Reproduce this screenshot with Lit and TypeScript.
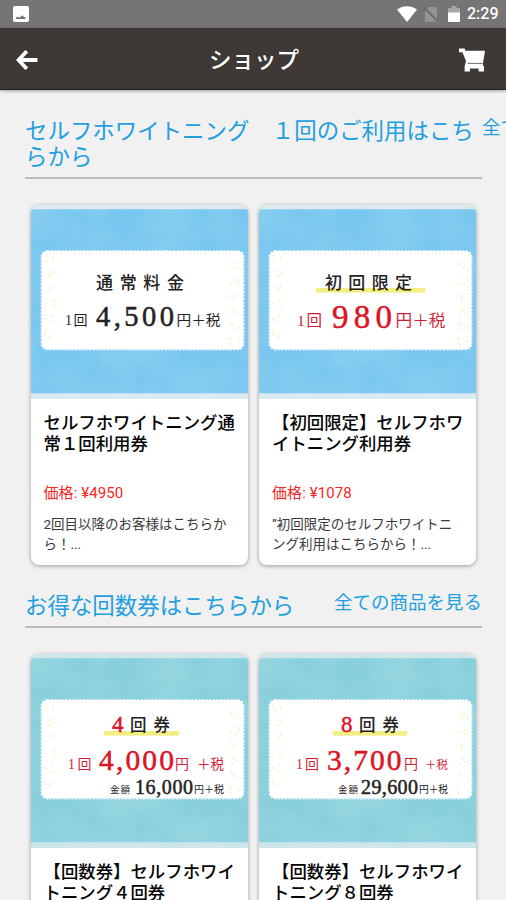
import { LitElement, html, svg, css } from "lit";
import { customElement, property } from "lit/decorators.js";

interface Label {
  t: string;
  x: number;
  y: number;
  w: number;
  size: number;
  cls: string;
}

interface Product {
  id: string;
  theme: "sky" | "aqua";
  underline?: [number, number];
  labels: Label[];
  title: string;
  price: string;
  description: string;
}

interface Section {
  title: string;
  products: Product[];
}

const label = (t: string, x: number, y: number, w: number, size: number, cls: string): Label => ({ t, x, y, w, size, cls });

const SECTIONS: Section[] = [
  {
    title: "セルフホワイトニング　１回のご利用はこちらから",
    products: [
      {
        id: "p1",
        theme: "sky",
        labels: [
          label("通常料金", 65, 84, 88, 17, "ink head"),
          label("1回", 34, 119.5, 22.5, 14, "ink"),
          label("4,500", 65, 120.5, 78, 28.5, "ink num"),
          label("円＋税", 145.5, 119.5, 44, 14, "ink"),
        ],
        title: "セルフホワイトニング通常１回利用券",
        price: "¥4950",
        description: "2回目以降のお客様はこちらから！...",
      },
      {
        id: "p2",
        theme: "sky",
        underline: [57, 109],
        labels: [
          label("初回限定", 66, 84, 87, 17, "ink head"),
          label("1回", 38, 121, 25, 15.5, "red"),
          label("980", 73, 122.5, 60, 33, "red num"),
          label("円＋税", 136.5, 121, 50, 15.5, "red"),
        ],
        title: "【初回限定】セルフホワイトニング利用券",
        price: "¥1078",
        description: "”初回限定のセルフホワイトニング利用はこちらから！...",
      },
    ],
  },
  {
    title: "お得な回数券はこちらから",
    products: [
      {
        id: "p3",
        theme: "aqua",
        underline: [73, 75],
        labels: [
          label("4", 81, 78, 12, 23, "red num"),
          label("回券", 99, 77, 40, 16.5, "ink head"),
          label("1回", 37, 115, 23.5, 14, "red"),
          label("4,000", 68, 116, 75, 29.5, "red num"),
          label("円", 144, 115, 14, 14, "red"),
          label("＋税", 166, 115, 27, 13.5, "red"),
          label("金額", 79, 139, 20, 9.5, "ink"),
          label("16,000", 104, 140, 58, 20, "ink num"),
          label("円＋税", 163, 139, 30, 10, "ink"),
        ],
        title: "【回数券】セルフホワイトニング４回券",
        price: "¥17600",
        description: "お得な４回券はこちらから！...",
      },
      {
        id: "p4",
        theme: "aqua",
        underline: [74, 74],
        labels: [
          label("8", 82, 78, 12, 23, "red num"),
          label("回券", 100, 77, 40, 16.5, "ink head"),
          label("1回", 37, 115, 23, 14, "red"),
          label("3,700", 68, 116, 74.5, 29.5, "red num"),
          label("円", 145, 115, 14, 14, "red"),
          label("＋税", 166, 115, 23, 11.5, "red"),
          label("金額", 79, 139, 20, 9.5, "ink"),
          label("29,600", 102, 140, 57, 20, "ink num"),
          label("円＋税", 160, 139, 29, 9.7, "ink"),
        ],
        title: "【回数券】セルフホワイトニング８回券",
        price: "¥32560",
        description: "お得な８回券はこちらから！...",
      },
    ],
  },
];

// Pale confetti scattered along both ends of the ticket.
const CONFETTI = Array.from({ length: 100 }, (_, i) => {
  const noise = Math.abs(Math.sin(i * 12.9898) * 43758.5453) % 1;
  const spread = noise * 12;
  const y = 50 + ((i * 53) % 91);
  return { x: i % 2 ? 13 + spread : 210 - spread, y };
});

@customElement("ticket-banner")
export class TicketBanner extends LitElement {
  @property({ attribute: false }) product!: Product;

  static styles = css`
    :host { display: block; height: 194px; }
    svg { display: block; width: 100%; height: 100%; }
    text { font-family: "Liberation Serif", "Noto Sans CJK JP", serif; }
    .ink { fill: #242222; }
    .head { font-weight: 500; }
    .red { fill: #d21f36; }
    .num { stroke-width: 0.5; }
    .ink.num { stroke: #242222; }
    .red.num { fill: #dc1425; stroke: #dc1425; }
    .sky { fill: #76c6ef; }
    .aqua { fill: #86cfdb; }
    .edge-sky { fill: #d9e9ee; }
    .edge-aqua { fill: #cbe4e9; }
    .ticket { fill: #fff; }
    .perforation { fill: none; stroke: #fff; stroke-opacity: 0.8; stroke-width: 1.4; stroke-dasharray: 2 1.6; }
    .marker { fill: #f4ee80; }
    .dot { fill: #f8f5d6; }
  `;

  render() {
    const p = this.product;
    return html`<svg viewBox="0 0 217 194" preserveAspectRatio="none">
      <defs>
        <filter id="paper" x="0" y="0" width="100%" height="100%">
          <feTurbulence type="fractalNoise" baseFrequency="0.025 0.03" numOctaves="3" seed="4"></feTurbulence>
          <feColorMatrix values="0 0 0 0 1  0 0 0 0 1  0 0 0 0 1  0.22 0 0 0 -0.05"></feColorMatrix>
        </filter>
      </defs>
      <rect class="edge-${p.theme}" width="217" height="194"></rect>
      <rect class=${p.theme} y="4.3" width="217" height="184"></rect>
      <rect width="217" height="194" filter="url(#paper)"></rect>
      <rect class="ticket" x="10.5" y="46" width="202" height="98.6" rx="6"></rect>
      <rect class="perforation" x="10.2" y="45.7" width="202.6" height="99.2" rx="6"></rect>
      ${CONFETTI.map((c) => svg`<circle class="dot" cx=${c.x} cy=${c.y} r="0.9"></circle>`)}
      ${p.underline
        ? svg`<rect class="marker" x=${p.underline[0]} y=${p.theme === "sky" ? 83 : 77} width=${p.underline[1]} height="4.6"></rect>`
        : null}
      ${p.labels.map(
        (l) => svg`<text class=${l.cls} x=${l.x} y=${l.y} font-size=${l.size} textLength=${l.w} lengthAdjust=${l.t.includes("＋") ? "spacingAndGlyphs" : "spacing"}>${l.t}</text>`
      )}
    </svg>`;
  }
}

@customElement("product-card")
export class ProductCard extends LitElement {
  @property({ attribute: false }) product!: Product;

  static styles = css`
    :host {
      display: block;
      height: 360px;
      box-sizing: border-box;
      background: #fff;
      border-radius: 8px;
      overflow: hidden;
      box-shadow: 0 1px 4px rgba(0, 0, 0, 0.36);
    }
    .body { padding: 14px 8px 0 13px; }
    .title { height: 63px; font-size: 17.4px; line-height: 21px; font-weight: 500; color: #050505; }
    .price { margin-top: 7px; font-size: 15px; line-height: 20px; letter-spacing: 0.1px; color: #fb2424; }
    .desc { margin-top: 12px; padding-right: 6px; font-size: 13.5px; line-height: 19.5px; color: #3a3a3a; }
  `;

  render() {
    const p = this.product;
    return html`
      <ticket-banner .product=${p}></ticket-banner>
      <div class="body">
        <div class="title">${p.title}</div>
        <div class="price">価格: ${p.price}</div>
        <div class="desc">${p.description}</div>
      </div>
    `;
  }
}

@customElement("app-root")
export class AppRoot extends LitElement {
  static styles = css`
    :host {
      display: flex;
      flex-direction: column;
      width: 506px;
      height: 900px;
      overflow: hidden;
      background: #f1f1f1;
      font-family: Roboto, "Noto Sans CJK JP", sans-serif;
    }
    .status {
      flex: none;
      display: flex;
      align-items: center;
      height: 28px;
      box-sizing: border-box;
      padding: 0 8px 0 12px;
      background: #757575;
      color: #fff;
    }
    .status svg { display: block; flex: none; }
    .wifi { margin-left: auto; }
    .sim { margin-left: 7px; }
    .battery { margin-left: 10px; }
    .clock { margin-left: 7px; width: 31px; font-size: 16px; line-height: 30px; font-weight: 500; white-space: nowrap; }
    .bar {
      flex: none;
      display: grid;
      grid-template-columns: 1fr auto 1fr;
      align-items: center;
      height: 62px;
      box-sizing: border-box;
      padding: 2px 20px 0 16px;
      background: #3e3837;
      border-bottom: 1px solid #262120;
      box-shadow: 0 1px 3px rgba(0, 0, 0, 0.35);
      color: #fff;
    }
    .bar svg { display: block; }
    .bar h1 { margin: 0; padding-left: 6px; font-size: 22.5px; line-height: 30px; font-weight: 500; }
    .cart { justify-self: end; }
    .content { flex: 1; min-height: 0; padding: 27.5px 24px 0 25px; }
    .head {
      display: flex;
      justify-content: space-between;
      border-bottom: 2px solid #bcbcbc;
      padding-bottom: 6.5px;
      color: #229fdf;
    }
    .head h2 { flex: none; max-width: 100%; margin: 0; font-size: 22.45px; line-height: 26.5px; font-weight: 400; }
    .all { flex: none; font-size: 18.5px; line-height: 21px; font-weight: 400; white-space: nowrap; }
    .grid { display: grid; grid-template-columns: 217px 217px; gap: 11.5px; padding: 26px 0 28px 5.5px; }
  `;

  render() {
    return html`
      <div class="status">
        <svg width="18" height="18" viewBox="0 0 18 18">
          <rect x="1" y="1" width="16" height="16" rx="2" fill="#fff"></rect>
          <path d="M4 14v-1.6l2-.6 1.8.6 2.4-2.2 1.6 1.6 1.6.4V14z" fill="#757575"></path>
        </svg>
        <svg class="wifi" width="20" height="16" viewBox="0 0 20 16"><path d="M0 3.6C6-1 14-1 20 3.6L10 16z" fill="#fff"></path></svg>
        <svg class="sim" width="14" height="16" viewBox="0 0 14 16">
          <path d="M5 1h8v15H1V5z" fill="#949494"></path>
          <path d="M0 1.5l14 14" stroke="#6b6b6b" stroke-width="1.8"></path>
        </svg>
        <svg class="battery" width="12" height="16" viewBox="0 0 12 16">
          <path d="M3.5 0h5v2H11a1 1 0 0 1 1 1v4H0V3a1 1 0 0 1 1-1h2.5z" fill="#a6a6a6"></path>
          <path d="M0 6.5h12V15a1 1 0 0 1-1 1H1a1 1 0 0 1-1-1z" fill="#fff"></path>
        </svg>
        <span class="clock">2:29</span>
      </div>
      <header class="bar">
        <svg width="22" height="20" viewBox="0 0 22 20">
          <path d="M10.8 1.2L2.5 10l8.3 8.8M3 10h18.4" fill="none" stroke="#fff" stroke-width="3.8" stroke-linejoin="miter"></path>
        </svg>
        <h1>ショップ</h1>
        <svg class="cart" width="27" height="24" viewBox="0 0 27 24">
          <path d="M0 .5h5.6l.9 2.2H26L24 15.2v2.2l1 1.2v4.8h-5.4v-3H11v3H5.6v-5L7 13 3.4 4.2H0z" fill="#fff"></path>
          <path d="M8.6 15.4h15" stroke="#7d7877" stroke-width="1.1"></path>
        </svg>
      </header>
      <main class="content">
        ${SECTIONS.map(
          (s) => html`
            <section>
              <div class="head">
                <h2>${s.title}</h2>
                <span class="all">全ての商品を見る</span>
              </div>
              <div class="grid">${s.products.map((p) => html`<product-card .product=${p}></product-card>`)}</div>
            </section>
          `
        )}
      </main>
    `;
  }
}
